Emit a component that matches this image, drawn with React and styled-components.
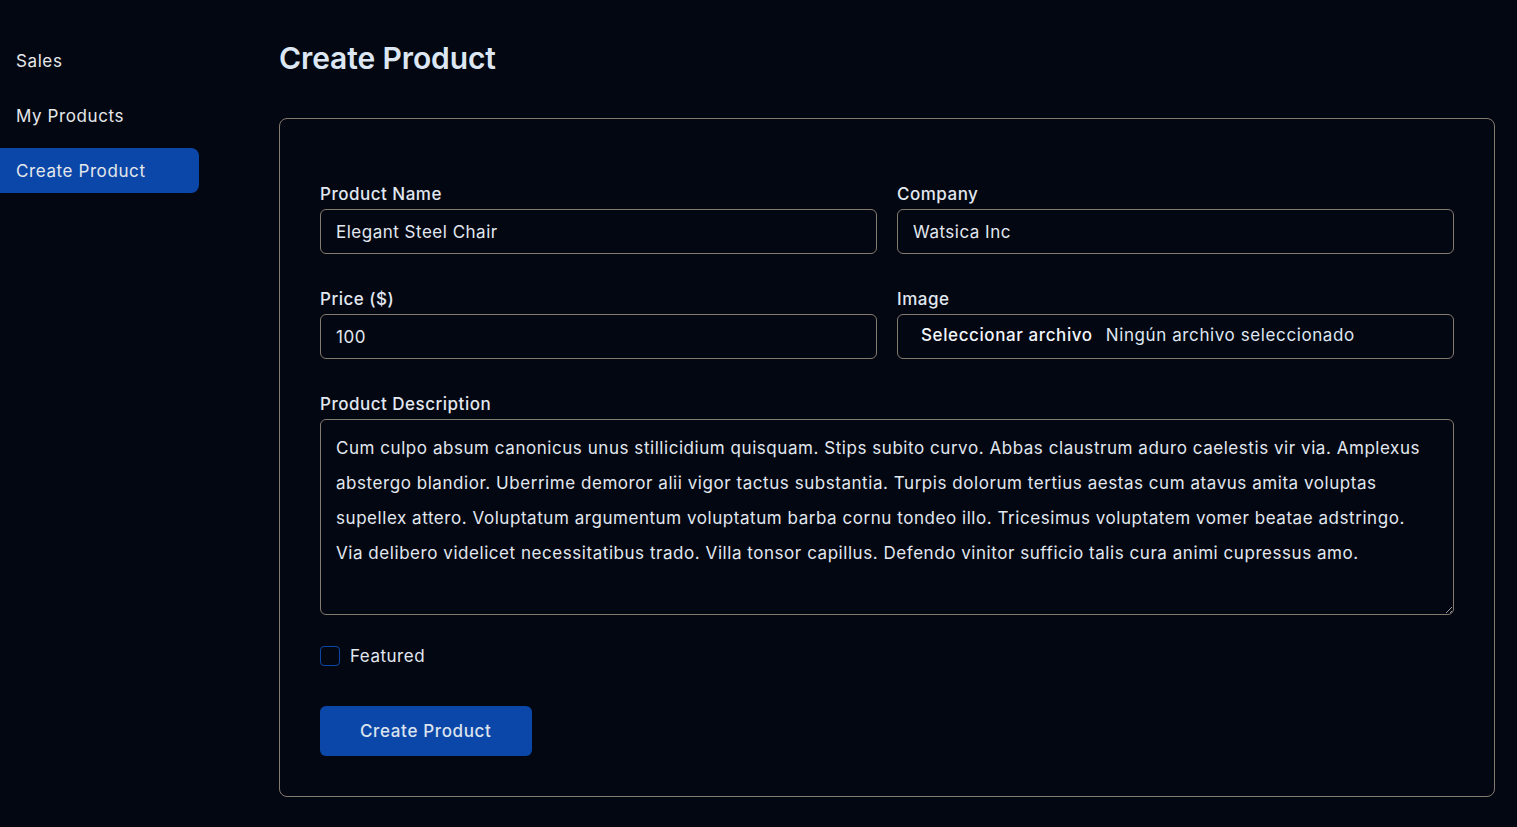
import React from "react";
import styled, { createGlobalStyle } from "styled-components";

const GlobalStyle = createGlobalStyle`
  html, body { margin: 0; padding: 0; background: #030712; }
  body {
    font-family: Inter, "Noto Sans", "Liberation Sans", sans-serif;
    color: #e2e8f0;
    color-scheme: dark;
  }
  * { box-sizing: border-box; }
`;

const Layout = styled.div`
  display: flex;
  min-height: 827px;
  background: #030712;
`;

const Sidebar = styled.nav`
  width: 199px;
  flex-shrink: 0;
  padding-top: 38px;
  display: flex;
  flex-direction: column;
  gap: 10px;
`;

const NavItem = styled.a`
  display: flex;
  align-items: center;
  height: 45px;
  padding-left: 16px;
  font-size: 17px;
  letter-spacing: 0.6px;
  color: #e5e7eb;
  text-decoration: none;
  border-radius: 0 8px 8px 0;
  background: ${(p) => (p.$active ? "#0b47a8" : "transparent")};
  cursor: pointer;
`;

const Main = styled.main`
  flex: 1;
  margin-left: 80px;
  padding: 38px 22px 30px 0;
`;

const Title = styled.h1`
  margin: 0 0 40px 0;
  font-size: 30px;
  line-height: 40px;
  font-weight: 600;
  letter-spacing: -0.1px;
  color: #dde7f3;
`;

const Card = styled.section`
  border: 1px solid #857a6f;
  border-radius: 8px;
  padding: 63px 40px 40px;
`;

const Grid = styled.div`
  display: grid;
  grid-template-columns: 1fr 1fr;
  column-gap: 20px;
  row-gap: 33px;
`;

const Field = styled.div`
  display: flex;
  flex-direction: column;
  grid-column: ${(p) => (p.$full ? "1 / -1" : "auto")};
`;

const Label = styled.label`
  font-size: 17px;
  line-height: 24px;
  margin-bottom: 3px;
  letter-spacing: 0.5px;
  color: #e2e8f0;
  font-weight: 500;
`;

const Input = styled.input`
  height: 45px;
  border: 1px solid #857a6f;
  border-radius: 6px;
  background: transparent;
  color: #e2e8f0;
  font-family: inherit;
  font-size: 17px;
  letter-spacing: 0.5px;
  padding: 0 15px;
  outline: none;
`;

const FileBox = styled.div`
  height: 45px;
  border: 1px solid #857a6f;
  border-radius: 6px;
  display: flex;
  align-items: center;
  padding: 0 0 4px 23px;
  font-size: 17px;
  letter-spacing: 0.6px;
  gap: 13px;
`;

const FileButton = styled.span`
  font-weight: 500;
  color: #f1f5f9;
`;

const FileStatus = styled.span`
  color: #dfe6f1;
`;

const TextArea = styled.textarea`
  height: 196px;
  border: 1px solid #857a6f;
  border-radius: 6px;
  background: transparent;
  color: #e2e8f0;
  font-family: inherit;
  font-size: 17px;
  letter-spacing: 0.55px;
  line-height: 35px;
  padding: 11px 30px 9px 15px;
  resize: vertical;
  outline: none;
`;

const CheckRow = styled.label`
  display: flex;
  align-items: center;
  gap: 10px;
  margin-top: 31px;
  font-size: 17px;
  letter-spacing: 0.5px;
  color: #e2e8f0;
`;

const Box = styled.span`
  width: 20px;
  height: 20px;
  border: 1.5px solid #0b47a8;
  border-radius: 4px;
  display: inline-block;
`;

const SubmitButton = styled.button`
  margin-top: 40px;
  height: 50px;
  padding: 0 40px;
  border: none;
  border-radius: 6px;
  background: #0b47a8;
  color: #dbe3ee;
  font-family: inherit;
  font-size: 17px;
  font-weight: 500;
  letter-spacing: 0.65px;
  cursor: pointer;
`;

const description =
  "Cum culpo absum canonicus unus stillicidium quisquam. Stips subito curvo. Abbas claustrum aduro caelestis vir via. Amplexus abstergo blandior. Uberrime demoror alii vigor tactus substantia. Turpis dolorum tertius aestas cum atavus amita voluptas supellex attero. Voluptatum argumentum voluptatum barba cornu tondeo illo. Tricesimus voluptatem vomer beatae adstringo. Via delibero videlicet necessitatibus trado. Villa tonsor capillus. Defendo vinitor sufficio talis cura animi cupressus amo.";

export default function App() {
  return (
    <>
      <GlobalStyle />
      <Layout>
        <Sidebar>
          <NavItem>Sales</NavItem>
          <NavItem>My Products</NavItem>
          <NavItem $active>Create Product</NavItem>
        </Sidebar>
        <Main>
          <Title>Create Product</Title>
          <Card>
            <Grid>
              <Field>
                <Label>Product Name</Label>
                <Input defaultValue="Elegant Steel Chair" />
              </Field>
              <Field>
                <Label>Company</Label>
                <Input defaultValue="Watsica Inc" />
              </Field>
              <Field>
                <Label>Price ($)</Label>
                <Input defaultValue="100" />
              </Field>
              <Field>
                <Label>Image</Label>
                <FileBox>
                  <FileButton>Seleccionar archivo</FileButton>
                  <FileStatus>Ningún archivo seleccionado</FileStatus>
                </FileBox>
              </Field>
              <Field $full>
                <Label>Product Description</Label>
                <TextArea defaultValue={description} />
              </Field>
            </Grid>
            <CheckRow>
              <Box />
              Featured
            </CheckRow>
            <SubmitButton>Create Product</SubmitButton>
          </Card>
        </Main>
      </Layout>
    </>
  );
}
